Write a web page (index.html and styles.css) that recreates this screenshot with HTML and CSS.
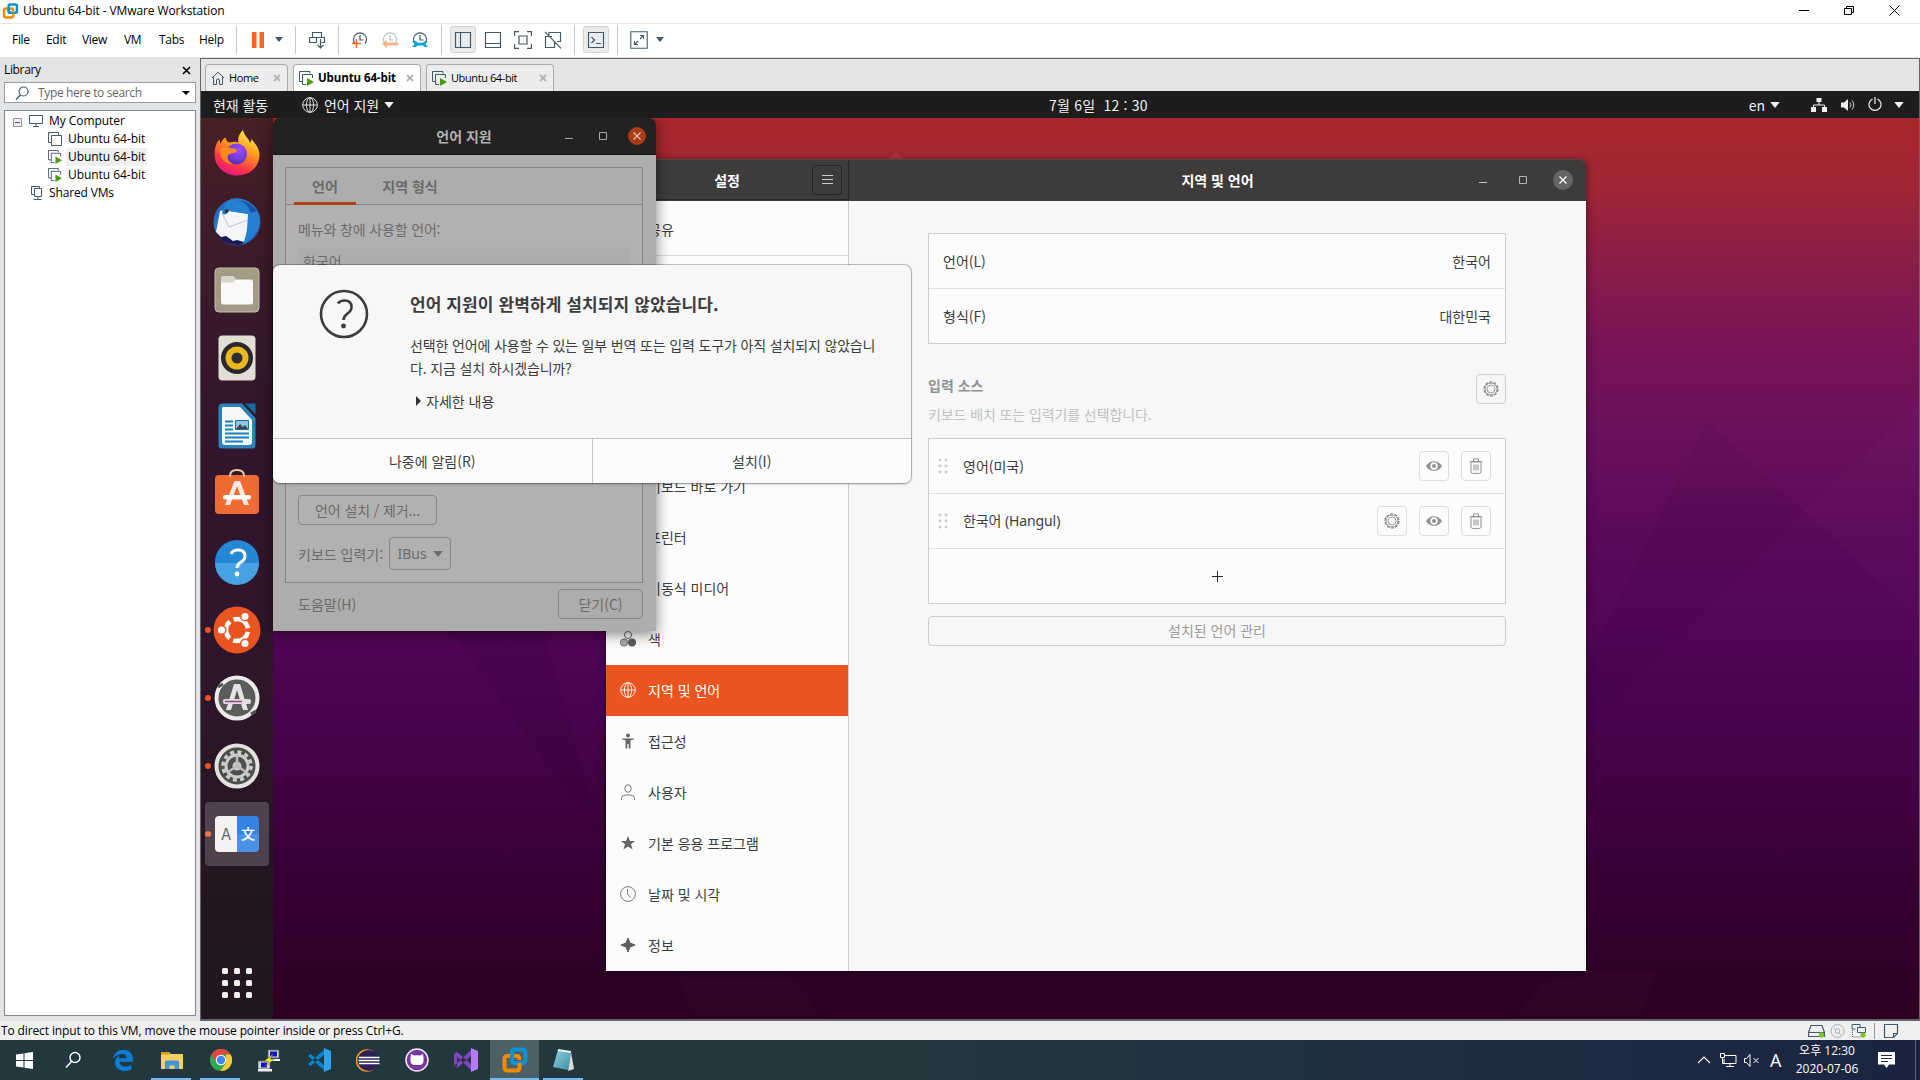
FILE: index.html
```html
<!DOCTYPE html>
<html lang="ko">
<head>
<meta charset="utf-8">
<title>Ubuntu 64-bit - VMware Workstation</title>
<link rel="stylesheet" href="styles.css">
</head>
<body>
<svg class="defs" width="0" height="0">
  <defs>
    <linearGradient id="gFox" x1="0.8" y1="0" x2="0.3" y2="1"><stop offset="0" stop-color="#fff44f"/><stop offset="0.4" stop-color="#ff9a1f"/><stop offset="0.75" stop-color="#ff3647"/><stop offset="1" stop-color="#e31587"/></linearGradient>
    <radialGradient id="gGlobe" cx="0.6" cy="0.3" r="0.8"><stop offset="0" stop-color="#a14bff"/><stop offset="0.5" stop-color="#7a3fe0"/><stop offset="1" stop-color="#4b2f9f"/></radialGradient>
    <linearGradient id="gBird" x1="0" y1="0" x2="1" y2="1"><stop offset="0" stop-color="#1b5fb8"/><stop offset="0.5" stop-color="#2a86d9"/><stop offset="1" stop-color="#1d3f94"/></linearGradient>
    <linearGradient id="gVm" x1="0" y1="0" x2="1" y2="1"><stop offset="0" stop-color="#8fd3e0"/><stop offset="1" stop-color="#3b8ea5"/></linearGradient>
    <symbol id="vm" viewBox="0 0 14 14"><path d="M3.5 10.500H.5V.5h10v3M3.500 3.500h10v10h-10z" fill="none" stroke="#44596a"/></symbol>
    <symbol id="vmrun" viewBox="0 0 15 15"><path d="M3 10.500H.5V.5h10.500v2M7 13.500H3.500v-10h10V7" fill="none" stroke="#44596a"/><path d="M8 7l7 4-7 4z" fill="#4c9a10"/></symbol>
    <symbol id="globe" viewBox="0 0 16 16"><g fill="none" stroke="currentColor" stroke-width=".9"><circle cx="8" cy="8" r="7.300"/><ellipse cx="8" cy="8" rx="3.600" ry="7.300"/><path d="M.7 8h14.600M8 .7v14.600"/></g></symbol>
    <symbol id="gear" viewBox="0 0 16 16"><g fill="none" stroke="currentColor"><circle cx="8" cy="8" r="6.900" stroke-width="1.500" stroke-dasharray="3 1.340"/><circle cx="8" cy="8" r="6"/><circle cx="8" cy="8" r="4" stroke-width=".9"/></g></symbol>
    <symbol id="eye" viewBox="0 0 16 16"><path d="M0 8c3.500-6.500 12.500-6.500 16 0-3.500 6.500-12.500 6.500-16 0z" fill="currentColor"/><circle cx="8" cy="8" r="3.700" fill="#fcfcfc"/><circle cx="8" cy="8" r="2" fill="currentColor"/></symbol>
    <symbol id="trash" viewBox="0 0 16 16"><path d="M1.500 4.500c0-1 1-1.500 2-1.500h9c1 0 2 .5 2 1.500z" fill="currentColor"/><path d="M5.500 3V.9h5V3M3 5v9c0 .8.500 1.400 1.300 1.400h7.400c.8 0 1.300-.6 1.300-1.400V5M6 6.500v6M8 6.500v6M10 6.500v6" fill="none" stroke="currentColor"/></symbol>
    <symbol id="clockface" viewBox="0 0 18 18"><path d="M4 12.500A6.500 6.500 0 1 1 14 12.500M9 4v5h3.500" fill="none" stroke="currentColor" stroke-width="1.200"/></symbol>
    <symbol id="tri" viewBox="0 0 8 5"><path d="M0 0h8L4 5z" fill="currentColor"/></symbol>
    <symbol id="vmware" viewBox="0 0 26 26"><rect x="10" y="2.500" width="13.500" height="13.500" rx="2.500" fill="none" stroke="#0d91d0" stroke-width="4"/><path d="M9 9H5.500Q2.500 9 2.500 12v8.500q0 3 3 3h9q3 0 3-3V16" fill="none" stroke="#f38b00" stroke-width="4"/><path d="M8 9h6.500q3 0 3 3v1" fill="none" stroke="#f38b00" stroke-width="3.800"/><path d="M10 7v6q0 3 2.500 3H15" fill="none" stroke="#0d91d0" stroke-width="4"/></symbol>
  </defs>
</svg>

<header class="titlebar">
  <svg class="logo" width="17" height="16"><use href="#vmware"/></svg>
  <span class="caption">Ubuntu 64-bit - VMware Workstation</span>
  <svg class="winbtn" width="11" height="11"><path d="M0 5.500h10" stroke="#000"/></svg>
  <svg class="winbtn" width="11" height="11"><path d="M.5 3.500h7v6h-7zM2.500 3V1.500h7v6H8" fill="none" stroke="#000"/></svg>
  <svg class="winbtn" width="11" height="11"><path d="M.5.5l10 10M10.500.5l-10 10" stroke="#000"/></svg>
</header>

<nav class="menubar">
  <span class="m m1">File</span><span class="m m2">Edit</span><span class="m m3">View</span><span class="m m4">VM</span><span class="m m5">Tabs</span><span class="m m6">Help</span>
  <i class="sep first"></i>
  <svg class="pause" width="12" height="16"><path d="M0 0h4.500v16H0zM7.500 0H12v16H7.500z" fill="#f9671c"/></svg>
  <svg class="drop a" width="8" height="5"><use href="#tri"/></svg>
  <i class="sep"></i>
  <svg class="tool" width="18" height="18"><path d="M4.500 1.500h9v5h-9zM1.500 6.500h7v5h-7zM8.500 6.500h8v5h-3M12.500 8v9M9.500 14l3 3 3-3" fill="none" stroke="#44596a" stroke-width="1.200"/></svg>
  <i class="sep"></i>
  <svg class="tool" width="18" height="18"><use href="#clockface" color="#44596a"/><path d="M1 12.500h9M5.500 8v9" stroke="#f9671c" stroke-width="1.500"/></svg>
  <svg class="tool" width="18" height="18"><use href="#clockface" color="#b7bec4"/><path d="M1 13l5-4v2.500h11v3H6V17z" fill="#fcb188"/></svg>
  <svg class="tool" width="18" height="18"><use href="#clockface" color="#44596a"/><path d="M1 10.500q4-2 5.500 1.200H12q2-3 5-1l-2.500 1.500v1.600L17 15.500q-3 1.800-5-1H6.500Q5 17.500 1 15.500l2.500-1.700v-1.600z" fill="#00a5d6"/></svg>
  <i class="sep"></i>
  <span class="toggle"><svg width="18" height="18"><path d="M1.500 1.500h15v15h-15zM6.500 1.500v15" fill="none" stroke="#44596a" stroke-width="1.200"/></svg></span>
  <svg class="tool near" width="18" height="18"><path d="M1.500 1.500h15v15h-15zM1.500 12.500h15" fill="none" stroke="#44596a" stroke-width="1.200"/></svg>
  <svg class="tool" width="18" height="18"><path d="M.6 5V.6H5M13 .6h4.400V5M17.400 13v4.400H13M5 17.400H.6V13M5 5h8v8H5z" fill="none" stroke="#44596a" stroke-width="1.200"/></svg>
  <svg class="tool" width="18" height="18"><path d="M5 4V1.500h11.500v9H13M8 5.500H1.500v11h9V10M1 .8l16 16.600" fill="none" stroke="#44596a" stroke-width="1.200"/></svg>
  <i class="sep"></i>
  <span class="toggle"><svg width="18" height="18"><path d="M1.500 1.500h15v15h-15zM4.500 6l3 3-3 3M9 12.500h5" fill="none" stroke="#44596a" stroke-width="1.200"/></svg></span>
  <i class="sep close"></i>
  <svg class="tool" width="18" height="18"><path d="M.8.8h16.400v16.400H.8zM10 4.500h3.500V8M13.500 4.500l-3.500 3.500M8 13.500H4.500V10M4.500 13.500L8 10" fill="none" stroke="#44596a" stroke-width="1.100"/></svg>
  <svg class="drop b" width="8" height="5"><use href="#tri"/></svg>
</nav>

<main class="workspace">
  <aside class="library">
    <div class="lib-head"><span>Library</span><svg width="9" height="9"><path d="M1 1l7 7M8 1L1 8" stroke="#000" stroke-width="1.600"/></svg></div>
    <div class="search"><svg width="14" height="14"><circle cx="8.500" cy="5.500" r="4.500" fill="none" stroke="#44596a" stroke-width="1.200"/><path d="M5.500 9L1 13.500" stroke="#44596a" stroke-width="1.400"/></svg><span>Type here to search</span><svg class="sdrop" width="8" height="4" viewBox="0 0 8 5" preserveAspectRatio="none"><path d="M0 0h8L4 5z"/></svg></div>
    <div class="tree">
      <div class="node root"><svg class="box" width="9" height="9"><path d="M.5.5h8v8h-8z" fill="#f4f4f4" stroke="#919191"/><path d="M2 4.500h5" stroke="#3b4f9a"/></svg><svg width="15" height="12"><path d="M.5.5h13v8H.500zM7 9v2M4 11.500h6" fill="none" stroke="#44596a"/></svg><span>My Computer</span></div>
      <div class="node"><svg width="14" height="14"><use href="#vm"/></svg><span>Ubuntu 64-bit</span></div>
      <div class="node picked"><svg width="14" height="14"><use href="#vmrun"/></svg><span>Ubuntu 64-bit</span></div>
      <div class="node"><svg width="14" height="14"><use href="#vmrun"/></svg><span>Ubuntu 64-bit</span></div>
      <div class="node shared"><svg width="12" height="14"><path d="M3 8.500H.5V.5h8v2M3.500 2.500h7v8h-7zM7 11v2.500M2.500 13.500h8" fill="none" stroke="#44596a"/></svg><span>Shared VMs</span></div>
    </div>
  </aside>

  <section class="console">
    <div class="tabs">
      <div class="tab home"><svg width="14" height="14"><path d="M1 7l6-5.800L13 7M2.500 6v7.500h3V9q0-1 1.500-1t1.500 1v4.500h3V6" fill="none" stroke="#44596a"/></svg><span>Home</span><svg class="x" width="8" height="8"><path d="M1 1l6 6M7 1L1 7"/></svg></div>
      <div class="tab active"><svg width="15" height="15"><use href="#vmrun"/></svg><span>Ubuntu 64-bit</span><svg class="x" width="8" height="8"><path d="M1 1l6 6M7 1L1 7"/></svg></div>
      <div class="tab other"><svg width="15" height="15"><use href="#vmrun"/></svg><span>Ubuntu 64-bit</span><svg class="x" width="8" height="8"><path d="M1 1l6 6M7 1L1 7"/></svg></div>
    </div>

    <div class="guest">
      <div class="topbar">
        <span class="activities">현재 활동</span>
        <span class="appmenu"><svg width="16" height="16"><use href="#globe"/></svg><span>언어 지원</span><svg width="10" height="6" viewBox="0 0 8 5"><use href="#tri"/></svg></span>
        <span class="date">7월 6일&nbsp; 12 : 30</span>
        <span class="status"><span>en</span><svg class="t1" width="10" height="6" viewBox="0 0 8 5"><use href="#tri"/></svg>
          <svg class="net" width="16" height="14"><path d="M5.500 0h5v4h-5zM0 9h5v5H0zM11 9h5v5h-5z" fill="#f0f0f0"/><path d="M8 4v3M2.500 9V7h11v2" fill="none" stroke="#f0f0f0"/></svg>
          <svg class="vol" width="16" height="14"><path d="M0 4.500h3L7 1v12L3 9.500H0z" fill="#f0f0f0"/><path d="M9 4.500q2 2.500 0 5M11 2.500q3.500 4.500 0 9" fill="none" stroke="#d0d0d0"/></svg>
          <svg class="pow" width="14" height="15"><path d="M4.500 2a6 6 0 1 0 5 0M7 0v7" fill="none" stroke="#f0f0f0" stroke-width="1.200"/></svg>
          <svg class="t2" width="10" height="6" viewBox="0 0 8 5"><use href="#tri"/></svg></span>
      </div>

      <div class="desktop">
        <svg class="facets" viewBox="0 0 1718 901" preserveAspectRatio="none">
          <path d="M1505 303L1602 393 1386 611V548z" fill="#200030" opacity=".06"/>
          <path d="M1718 287L1602 393 1718 500z" fill="#fff" opacity=".015"/>
          <path d="M240 500L400 720 340 500z" fill="#200030" opacity=".1"/>
          <path d="M477 853h110l35 48H492zM1355 853h100l-15 48h-130z" fill="#fff" opacity=".012"/>
          <path d="M686 41l9-7 9 7z" fill="#d04a58" opacity=".3"/>
        </svg>

        <div class="dock">
          <div class="slot"><svg width="46" height="46"><path d="M23 45.500C10 45.500.5 36 .5 24 .5 17 3 12 5.500 9.500L6.500 14c1-3 3-5.500 5-6.500.5 3 2 4.500 4 5 4-1 7-1 9 0C23 8 26 3 29 0c1 6 6 8 7 13 1-1 1.500-3 1.500-4 5 6 8.500 11 8 17-.7 11.500-10 19.500-22.500 19.500z" fill="url(#gFox)"/><circle cx="22.500" cy="24" r="10.500" fill="url(#gGlobe)"/><path d="M6 19c5-3 9-1 11-1 4 1 6 1 6 3-2 3-5 1-9 4-2 4 2 8 5 9-9 0-14-7-13-15z" fill="#ff8a1a"/></svg></div>
          <div class="slot low"><svg width="50" height="50"><circle cx="25" cy="25" r="23.500" fill="url(#gBird)"/><path d="M3 35l30 10q-5 4-9 3Q9 47 3 35z" fill="#1c1a52"/><path d="M8 14l4-1 24 4-1 26-3 2-7-2-4 1-7-5-5 1-5-5z" fill="#f5f5f8"/><path d="M10 16l7 14 19-7" fill="none" stroke="#c3c3cc"/><path d="M10 16c3 3 5 1 7-2l19 3c0 11-1 20-5 30C46 41 50 26 47 17 42 6 30-1 19 2c-5 3-8 8-9 14z" fill="#2680d0"/><path d="M20 3q14-1 19 13l6-2Q38 2 20 3z" fill="#1a53ae"/><circle cx="14.500" cy="14" r="2" fill="#333"/></svg></div>
          <div class="slot low"><svg width="46" height="46"><rect x="1" y="1" width="44" height="44" rx="4" fill="#a39b86" stroke="#c4bfb0"/><rect x="7" y="12.500" width="32" height="25" rx="2.500" fill="#faf9f7"/><path d="M7 15.500V11q0-2 2-2h10l3 3-3 3.500z" fill="#d9d6cd"/></svg></div>
          <div class="slot low"><svg width="38" height="46"><rect x=".5" y=".5" width="37" height="45" rx="4" fill="#e3ded3"/><circle cx="19" cy="23" r="16" fill="#28282e"/><circle cx="19" cy="23" r="11.500" fill="#eab71c"/><circle cx="19" cy="23" r="5.500" fill="#303033"/></svg></div>
          <div class="slot low"><svg width="38" height="46"><path d="M5 .5h19L37.500 15v27q0 3.500-3.500 3.500H4Q.5 45.500.5 42V4Q.5.5 5 .5z" fill="#2b84b8"/><path d="M5 4h17l12 13v22q0 3-3 3H7q-3 0-3-3V5z" fill="#f7f8f9"/><path d="M27 .5h10.500v11z" fill="#106ba3"/><path d="M7 18.500h8M7 22.500h8M7 26.500h8M7 30.500h24M7 34.500h24M7 38.500h18" stroke="#1a7fc0" stroke-width="2"/><path d="M17.500 17.500h13v9h-13z" fill="#8ec4e4" stroke="#1a6ca0"/><path d="M18 26l4-5 3 3 2-2 3 4z" fill="#454545"/></svg></div>
          <div class="slot"><svg width="46" height="48"><path d="M16 10V7q0-6 7-6t7 6v3" fill="none" stroke="#eacb9b" stroke-width="2"/><rect x="1" y="6" width="44" height="39" rx="4" fill="#f06a33"/><path d="M16 8V6M30 8V6" stroke="#eacb9b" stroke-width="2"/><path d="M20.500 12h5.500l9 24h-5l-7-19-7 19h-5z" fill="#f8e9e2"/><rect x="9" y="26" width="28" height="4.500" rx="2" fill="#fff"/></svg></div>
          <div class="slot low"><svg width="46" height="46"><circle cx="23" cy="23" r="22" fill="#2588d6"/><path d="M1 24a22 22 0 0 0 44 0z" fill="#46a2e3"/><path d="M17 15q2-4 7-4 7 0 7 6 0 4-4 6-4 2.500-4 6" fill="none" stroke="#fff" stroke-width="3"/><circle cx="23" cy="35" r="2.400" fill="#fff"/></svg></div>
          <div class="slot run"><svg width="48" height="48"><circle cx="24" cy="24" r="23.500" fill="#e95420"/><circle cx="24" cy="24" r="11" fill="none" stroke="#fff" stroke-width="4.500" stroke-dasharray="19 4" stroke-dashoffset="-2"/><circle cx="8.500" cy="24" r="4.300" fill="#fff" stroke="#e95420" stroke-width="1.500"/><circle cx="32" cy="10.500" r="4.300" fill="#fff" stroke="#e95420" stroke-width="1.500"/><circle cx="32" cy="37.500" r="4.300" fill="#fff" stroke="#e95420" stroke-width="1.500"/></svg></div>
          <div class="slot run"><svg width="46" height="46"><circle cx="23" cy="23" r="20.500" fill="#5c5c5a" stroke="#ecebe9" stroke-width="4"/><path d="M4 12l5-3M37 39l5-3" stroke="#555" stroke-width="3"/><path d="M20 9h6l8 26h-5l-6-20-6 20h-5z" fill="#e6e4e2"/><rect x="9" y="24" width="28" height="5" rx="2" fill="#ddd"/><path d="M11 26.500h17" stroke="#a0409a" stroke-width="1.500"/></svg></div>
          <div class="slot run"><svg width="46" height="46"><circle cx="23" cy="23" r="20.500" fill="#4e4e4c" stroke="#e3e2df" stroke-width="4"/><circle cx="23" cy="23" r="14" fill="none" stroke="#ccc" stroke-width="3.500" stroke-dasharray="4 3.330"/><circle cx="23" cy="23" r="11" fill="none" stroke="#ccc" stroke-width="3"/><circle cx="23" cy="23" r="4.500" fill="#c8c8c8"/><path d="M23 23V12M23 23l9 6M23 23l-9 6" stroke="#bbb" stroke-width="2.500"/></svg></div>
          <div class="slot run current"><div class="lang-icon"><span>A</span><span>文</span></div></div>
          <div class="apps"><i></i><i></i><i></i><i></i><i></i><i></i><i></i><i></i><i></i></div>
        </div>

        <section class="win settings">
          <div class="s-head">
            <div class="s-left"><b>설정</b><span class="burger"><svg width="11" height="11"><path d="M0 1.500h11M0 5.500h11M0 9.500h11" stroke="#ccc"/></svg></span></div>
            <div class="s-right"><b>지역 및 언어</b>
              <span class="controls"><svg width="20" height="20"><path d="M6 12.500h8" stroke="#c8c8c8"/></svg><svg width="20" height="20"><path d="M6.500 6.500h7v7h-7z" fill="none" stroke="#b4b4b4"/></svg><svg width="20" height="20"><circle cx="10" cy="10" r="10" fill="#666564"/><path d="M6.500 6.500l7 7M13.500 6.500l-7 7" stroke="#fff" stroke-width="1.300"/></svg></span>
            </div>
          </div>
          <div class="s-body">
            <div class="side">
              <div class="row share"><span>공유</span></div>
              <div class="row keys"><span>키보드 바로 가기</span></div>
              <div class="row"><span>프린터</span></div>
              <div class="row"><span>이동식 미디어</span></div>
              <div class="row"><svg width="16" height="16"><circle cx="8" cy="4" r="3.500" fill="none" stroke="#666"/><circle cx="4" cy="11.500" r="3.600" fill="#aaa" stroke="#666"/><circle cx="12" cy="11.500" r="4" fill="#5c5c5c"/></svg><span>색</span></div>
              <div class="row on"><svg width="16" height="16"><use href="#globe"/></svg><span>지역 및 언어</span></div>
              <div class="row"><svg width="16" height="16"><circle cx="8" cy="2.500" r="2" fill="#666"/><path d="M2 5.500h12v1l-3.500.7v8.300H8.700V11H7.300v4.500H5.500V7.200L2 6.500z" fill="#666"/></svg><span>접근성</span></div>
              <div class="row"><svg width="16" height="16"><ellipse cx="8" cy="4.500" rx="3.200" ry="3.800" fill="none" stroke="#777"/><path d="M1.500 16v-1.500q0-3.500 4-3.500h5q4 0 4 3.500V16" fill="none" stroke="#777"/></svg><span>사용자</span></div>
              <div class="row"><svg width="16" height="16"><path d="M8 1l2 5h5l-4 3.300 1.600 5.200L8 11.500l-4.600 3L5 9.300 1 6h5z" fill="#666"/></svg><span>기본 응용 프로그램</span></div>
              <div class="row"><svg width="16" height="16"><circle cx="8" cy="8" r="7.400" fill="none" stroke="#777"/><path d="M7.500 3v5l3 3.500" fill="none" stroke="#777"/></svg><span>날짜 및 시각</span></div>
              <div class="row"><svg width="16" height="16"><path d="M8 1l2 5 5 2-5 2-2 5-2-5-5-2 5-2z" fill="#5c5c5c" stroke="#5c5c5c"/></svg><span>정보</span></div>
            </div>
            <div class="pane">
              <div class="card">
                <div class="line"><span>언어(L)</span><span>한국어</span></div>
                <div class="line"><span>형식(F)</span><span>대한민국</span></div>
              </div>
              <div class="sources"><div><b>입력 소스</b><p>키보드 배치 또는 입력기를 선택합니다.</p></div><span class="ib dark"><svg width="16" height="16"><use href="#gear"/></svg></span></div>
              <div class="card list">
                <div class="line"><i class="grip"></i><span class="name">영어(미국)</span><span class="ib"><svg width="16" height="16"><use href="#eye"/></svg></span><span class="ib"><svg width="16" height="16"><use href="#trash"/></svg></span></div>
                <div class="line"><i class="grip"></i><span class="name latin">한국어 (Hangul)</span><span class="ib"><svg width="16" height="16"><use href="#gear"/></svg></span><span class="ib"><svg width="16" height="16"><use href="#eye"/></svg></span><span class="ib"><svg width="16" height="16"><use href="#trash"/></svg></span></div>
                <div class="line add"><svg width="11" height="11"><path d="M0 5.500h11M5.500 0v11" stroke="#2b2b2b"/></svg></div>
              </div>
              <div class="manage">설치된 언어 관리</div>
            </div>
          </div>
        </section>

        <section class="win support">
          <div class="l-head"><b>언어 지원</b><span class="controls"><svg width="18" height="18"><path d="M5 11.500h8" stroke="#aaa"/></svg><svg width="18" height="18"><path d="M5.500 5.500h7v7h-7z" fill="none" stroke="#aaa"/></svg><svg width="18" height="18"><circle cx="9" cy="9" r="9" fill="#a83c17"/><path d="M5.500 5.500l7 7M12.500 5.500l-7 7" stroke="#d8c5bd" stroke-width="1.200"/></svg></span></div>
          <div class="l-body">
            <div class="book">
              <div class="pages"><b class="cur">언어</b><b>지역 형식</b></div>
              <p class="cap">메뉴와 창에 사용할 언어:</p>
              <div class="langs">한국어</div>
              <div class="btn inst">언어 설치 / 제거...</div>
              <div class="im"><span>키보드 입력기:</span><span class="btn combo">IBus<svg width="10" height="6" viewBox="0 0 8 5"><use href="#tri"/></svg></span></div>
            </div>
            <div class="foot"><span>도움말(H)</span><span class="btn shut">닫기(C)</span></div>
          </div>
        </section>

        <section class="dialog">
          <div class="d-main">
            <svg width="50" height="50"><circle cx="25" cy="25" r="23" fill="none" stroke="#3d3d3d" stroke-width="2.600"/><path d="M19 14.500q2-3 6.500-3 7 0 7 6.500 0 4-4 6.500-4 3-4 6.500" fill="none" stroke="#3d3d3d" stroke-width="2.600"/><circle cx="24.500" cy="37" r="2.400" fill="#3d3d3d"/></svg>
            <div class="d-text">
              <h1>언어 지원이 완벽하게 설치되지 않았습니다.</h1>
              <p>선택한 언어에 사용할 수 있는 일부 번역 또는 입력 도구가 아직 설치되지 않았습니<br>다. 지금 설치 하시겠습니까?</p>
              <div class="more"><svg width="5" height="10"><path d="M0 0l5 5-5 5z" fill="#333"/></svg><span>자세한 내용</span></div>
            </div>
          </div>
          <div class="d-actions"><span>나중에 알림(R)</span><span>설치(I)</span></div>
        </section>
      </div>
    </div>
  </section>
</main>

<footer class="statusbar">
  <span>To direct input to this VM, move the mouse pointer inside or press Ctrl+G.</span>
  <svg width="98" height="16">
    <path d="M3 2.500h11l2.500 7v4H.5v-4zM.5 9.500h16" fill="none" stroke="#44596a" stroke-width="1.200"/><circle cx="13.500" cy="12" r="2.800" fill="#7ac421"/>
    <circle cx="29.500" cy="8" r="6.500" fill="none" stroke="#a9b1b8"/><circle cx="29.500" cy="8" r="2.200" fill="none" stroke="#a9b1b8"/><path d="M26 5l2 2M31 10l2 2" stroke="#a9b1b8"/>
    <path d="M47.500 6h-3.500V1.500h8V4M49.500 4.500h8v5h-8z" fill="none" stroke="#44596a"/><path d="M44.500 7v7h9" fill="none" stroke="#44596a" stroke-dasharray="1 1"/><circle cx="55" cy="12" r="2.600" fill="#7ac421"/>
    <path d="M66.500 0v16" stroke="#999"/>
    <path d="M76.500 1.500h13v9l-4 4h-9zM89.500 10.500h-4v4" fill="none" stroke="#44596a" stroke-width="1.200"/>
  </svg>
</footer>

<div class="taskbar">
  <div class="cell start"><svg width="17" height="17"><path d="M0 2.500l7.500-1V8H0zM8.500 1.300L17 0v8H8.500zM0 9h7.500v6.500l-7.500-1zM8.500 9H17v8l-8.500-1.300z" fill="#fff"/></svg></div>
  <div class="cell find"><svg width="18" height="18"><circle cx="11" cy="6.500" r="5" fill="none" stroke="#fff" stroke-width="1.400"/><path d="M7.500 10.500L2 16.500" stroke="#fff" stroke-width="1.500"/></svg></div>
  <div class="cell"><svg width="22" height="22"><path d="M1 10C2 4 6 .7 11.500.7c6 0 9.500 4.300 9.500 9.500v2.500H7.500c.3 3.300 3 4.800 6 4.800 2.500 0 4.500-.7 6-1.700v4.400c-2 1-4.200 1.600-7 1.600-6 0-9.500-3.500-9.500-8.300 0-3.300 2-6.200 5-7.500-.8 1-1.200 2-1.300 3.200h8C14.700 6.500 13 5 10.500 5 6.500 5 3 7 1 10z" fill="#0f7bd9"/></svg></div>
  <div class="cell open"><svg width="22" height="19"><path d="M0 1h8l2 2h12v15H0z" fill="#f7cf63"/><path d="M0 1h8l2 2.500H0z" fill="#d99a1c"/><path d="M4 18v-7q0-1.500 1.500-1.500h11Q18 9.500 18 11v7h-4.500v-3.500h-5V18z" fill="#3f97d8"/></svg></div>
  <div class="cell open"><svg width="22" height="22"><circle cx="11" cy="11" r="11" fill="#2da94f"/><path d="M11 0a11 11 0 0 1 9.600 5.500H11L6 13.500 1.400 5.700A11 11 0 0 1 11 0z" fill="#e3483b"/><path d="M20.600 5.500A11 11 0 0 1 10.500 22L16 13.800V5.500z" fill="#fcc934"/><circle cx="11" cy="11" r="5.300" fill="#fff"/><circle cx="11" cy="11" r="4.200" fill="#4285f4"/></svg></div>
  <div class="cell"><svg width="23" height="23"><path d="M10 1h11v8H10zM0 12h12v8H0z" fill="#d6d6d0" stroke="#555" stroke-width=".8"/><path d="M12 2.500h7v5h-7zM3 13.500h6v5H3z" fill="#1414c8"/><path d="M10 10h12v2H10zM0 20h14v2.500H0z" fill="#eee"/><path d="M15 5L6 12.500h5L7 18l9-8h-4z" fill="#f4ee1e" stroke="#665" stroke-width=".5"/></svg></div>
  <div class="cell"><svg width="24" height="24"><path d="M1 8l2.500-2L18 18v5zM1 16l2.500 2L18 6V1z" fill="#0c84cc"/><path d="M17 0l7 3v18l-7 3z" fill="#2aa4ef"/></svg></div>
  <div class="cell"><svg width="24" height="23"><circle cx="11" cy="11.500" r="10.500" fill="none" stroke="#f7941e" stroke-width="1.600"/><circle cx="13" cy="11.500" r="10.500" fill="#2c2255"/><path d="M3 8.500h20.500M2.500 11.500h21M3 14.500h20.500" stroke="#fff" stroke-width="1.500"/></svg></div>
  <div class="cell"><svg width="24" height="24"><circle cx="12" cy="12" r="11" fill="#7a36a0" stroke="#f1eaf5" stroke-width="1.500"/><path d="M6 6l3.500 1.600q2.500-.6 5 0L18 6l.6 4.500q.4 5.500-3.100 6.500h-7q-3.500-1-3.100-6.500z" fill="#fff"/></svg></div>
  <div class="cell"><svg width="24" height="24"><path d="M0 6l3-2L18 17v6zM0 18l3 2L18 7V1zM0 6h3v13H0z" fill="#8445c4"/><path d="M17 0l7 3v18l-7 3z" fill="#b77cf0"/></svg></div>
  <div class="cell focus"><svg width="26" height="26"><use href="#vmware"/></svg></div>
  <div class="cell open"><svg width="23" height="23"><path d="M6 1l13 2-3 18-15-3z" fill="url(#gVm)"/><path d="M19 3l3 17-6 2z" fill="#d9dcdc"/><path d="M6 1l13 2" stroke="#e8eef0" stroke-width="2"/></svg></div>
  <div class="tray">
    <svg width="14" height="8"><path d="M1 7l6-6 6 6" fill="none" stroke="#fff" stroke-width="1.200"/></svg>
    <svg class="tn" width="17" height="15"><path d="M5 2.500h11v8H4V6M10 11v3M6 13.500h8" fill="none" stroke="#fff"/><path d="M.5.5h4v4h-4zM2.500 4.500v6h3" fill="none" stroke="#fff"/></svg>
    <svg class="tv" width="15" height="13"><path d="M.5 4.500h2l3.500-4v12l-3.500-4h-2zM9.500 4l5 5M14.500 4l-5 5" fill="none" stroke="#fff"/></svg>
    <span class="ime">A</span>
    <span class="clock">오후 12:30<br>2020-07-06</span>
    <svg class="note" width="17" height="16"><path d="M0 0h17v12.500h-6L8.500 16 6 12.500H0z" fill="#fff"/><path d="M3 3.500h11M3 6.500h11M3 9.500h7" stroke="#1c2a42"/></svg>
    <i class="peek"></i>
  </div>
</div>
</body>
</html>
```
FILE: styles.css
```css
* { box-sizing: border-box; }
body {
  margin: 0; width: 1920px; height: 1080px; overflow: hidden;
  display: flex; flex-direction: column;
  font: 12px/18px "Open Sans", "Noto Sans CJK KR", sans-serif;
  color: #000; background: #e3e4e6;
}
svg { display: block; flex: none; }
span, b { white-space: nowrap; }
.defs { position: absolute; }

.titlebar { height: 24px; display: flex; align-items: center; background: #fff; border-bottom: 1px solid #e5e5e5; padding: 0 20px 3px 2px; }
.titlebar .logo { margin-right: 4px; margin-top: 2px; }
.caption { flex: 1; letter-spacing: -.09px; margin-top: 2px; }
.winbtn { margin-left: 34px; }

.menubar { height: 34px; display: flex; align-items: center; background: #fff; padding: 0 0 2px 12px; border-bottom: 1px solid #e0e0e0; letter-spacing: -.3px; }
.m1 { width: 34px; } .m2 { width: 36px; } .m3 { width: 42px; } .m4 { width: 35px; } .m5 { width: 40px; } .m6 { width: 37px; }
.sep { width: 1px; height: 28px; background: #c6c6c6; margin-left: 12px; flex: none; }
.sep.first { margin-left: 0; }
.sep.close { margin-left: 8px; }
.pause { margin-left: 15px; }
.drop { color: #44596a; }
.drop.a { margin-left: 11px; }
.drop.b { margin-left: 8px; }
.tool { margin-left: 12px; }
.toggle { width: 26px; height: 27px; margin-left: 8px; display: flex; align-items: center; justify-content: center; background: #e9ebed; border: 1px solid #d0d2d4; border-radius: 3px; }
.toggle + .near, .toggle + .sep { margin-left: 8px; }

.workspace { height: 963px; display: flex; }
.library { width: 200px; padding: 0 4px 0 4px; display: flex; flex-direction: column; }
.lib-head { height: 24px; display: flex; align-items: center; justify-content: space-between; padding: 0 5px 0 0; letter-spacing: -.35px; }
.search { width: 192px; height: 21px; display: flex; align-items: center; background: #fff; border: 1px solid #9a9ca0; color: #666; padding: 0 5px 0 10px; }
.search span { flex: 1; margin-left: 9px; letter-spacing: -.35px; }
.tree { width: 192px; height: 906px; margin-top: 7px; background: #fff; border: 1px solid #828790; padding: 1px 0 0 8px; }
.node { height: 18px; display: flex; align-items: center; padding-left: 35px; letter-spacing: -.05px; }
.node span { padding: 0 2px; margin-left: 4px; }
.node.root, .node.shared { padding-left: 0; }
.node.root .box { margin-right: 7px; margin-top: 3px; }
.node.root span { margin-left: 3px; }
.node.shared { padding-left: 18px; }
.node.shared span { letter-spacing: -.15px; }
.node.picked span { background: #efefef; }

.console { flex: 1; border: 1px solid #646567; border-width: 1px 1px 2px 1px; display: flex; flex-direction: column; }
.tabs { height: 32px; display: flex; align-items: flex-end; padding-left: 4px; font-size: 11px; letter-spacing: -.4px; }
.tab { height: 27px; display: flex; align-items: center; background: #ececed; border: 1px solid #a9abad; border-bottom: 0; border-radius: 4px 4px 0 0; padding: 0 6px 0 5px; margin-right: 5px; }
.tab.home { width: 83px; } .tab.active { width: 128px; } .tab.other { width: 128px; }
.tab.active { background: #fff; font-weight: 700; font-size: 11.500px; letter-spacing: -.1px; }
.tab span { flex: 1; margin-left: 4px; }
.tab .x { stroke: #b3b3b3; stroke-width: 1.800; }

.guest { flex: 1; display: flex; flex-direction: column; font: 14px/20px "Noto Sans CJK KR", "Noto Sans", sans-serif; }
.topbar { height: 27px; background: #1d1d1d; color: #f0f0f0; display: grid; grid-template-columns: 90px 746px 1fr auto; align-items: center; padding: 0 15px 0 12px; }
.appmenu { display: flex; align-items: center; gap: 6px; }
.appmenu svg { margin-left: -1px; }
.appmenu > span { padding-top: 1px; letter-spacing: -.1px; }
.activities { padding-top: 1px; letter-spacing: -.05px; }
.date { padding-top: 1px; letter-spacing: .2px; }
.status { display: flex; align-items: center; justify-content: flex-end; }
.t1 { margin: 0 31px 0 5px; }
.vol { margin-left: 14px; } .pow { margin-left: 11px; } .t2 { margin-left: 12px; }

.desktop { flex: 1; position: relative; overflow: hidden; background: linear-gradient(#a8272b 0, #a02536 70px, #8c1d48 140px, #791456 220px, #69105d 320px, #5b0859 420px, #530657 500px, #46034a 620px, #3a0038 740px, #2b0020 901px); }
.facets { width: 100%; height: 100%; position: absolute; inset: 0; }
.dock { position: relative; width: 72px; height: 100%; padding-top: 1px; background: linear-gradient(#481f24 0, #3b1a2a 150px, #33152d 300px, #2f152c 530px, #231620 800px, #211720 100%); }
.slot { height: 68px; display: flex; align-items: center; justify-content: center; position: relative; }
.slot.low { padding-top: 2px; }
.slot.run::before { content: ""; position: absolute; left: 4px; top: 32px; width: 6px; height: 6px; border-radius: 50%; background: #e95420; }
.slot.current::after { content: ""; position: absolute; inset: 3px 4px 1px; border-radius: 4px; background: rgba(255,255,255,.19); }
.slot.run svg, .lang-icon { margin-top: 1px; }
.lang-icon { position: relative; z-index: 1; width: 44px; height: 36px; display: flex; border-radius: 4px; overflow: hidden; font-size: 16px; line-height: 35px; text-align: center; }
.lang-icon span { flex: 1; background: #f4f3f1; color: #666; }
.lang-icon span + span { background: linear-gradient(#3584e4 50%, #4a92e8 50%); color: #fff; font-weight: 500; font-size: 14px; }
.apps { display: grid; grid-template-columns: repeat(3, 6px); gap: 6px; justify-content: center; margin-top: 101px; }
.apps i { width: 6px; height: 6px; border-radius: 1.500px; background: #f2f0ef; }

.win { position: absolute; display: flex; flex-direction: column; }
.controls { position: absolute; right: 9px; display: flex; gap: 16px; }
.settings { left: 405px; top: 41px; width: 980px; height: 812px; color: #3d3d3d; box-shadow: 0 2px 9px rgba(0,0,0,.5); border-radius: 7px 7px 0 0; }
.s-head { height: 42px; display: flex; background: #3d3c3a; border-top: 1px solid #4b4a48; border-radius: 7px 7px 0 0; color: #fff; padding-bottom: 2px; }
.s-left { width: 243px; box-shadow: 1px 2px 0 -1px #292827; border-right: 1px solid #292827; display: flex; align-items: center; justify-content: flex-end; padding-right: 6px; }
.s-left b { margin-right: 72px; }
.burger { width: 30px; height: 30px; border: 1px solid #262524; border-radius: 4px; display: flex; align-items: center; justify-content: center; }
.s-right { flex: 1; display: flex; align-items: center; justify-content: center; position: relative; }
.settings .controls { right: 13px; gap: 20px; }
.s-body { flex: 1; display: flex; overflow: hidden; }
.side { width: 243px; background: #fcfcfc; border-right: 1px solid #cdcdcd; }
.row { height: 51px; display: flex; align-items: center; padding-left: 14px; color: #3d3d3d; }
.row svg { margin-top: -2px; margin-right: 12px; }
.row span { margin-top: -1px; }
.row.share { height: 55px; padding: 3px 0 0 42px; border-bottom: 1px solid #dcdcdc; margin-bottom: 205px; }
.row.keys, .row.keys + .row, .row.keys + .row + .row { padding-left: 42px; }
.row.on { background: #e95420; color: #fff; }
.pane { flex: 1; background: #f7f7f7; padding: 32px 80px 0 79px; }
.card { border: 1px solid #cdcdcd; background: #fcfcfc; }
.card .line { height: 55px; display: flex; align-items: center; justify-content: space-between; padding: 0 14px; border-bottom: 1px solid #e1e1e1; }
.card .line:last-child { border-bottom: 0; height: 54px; }
.sources { display: flex; justify-content: space-between; align-items: flex-start; height: 94px; padding-top: 30px; }
.sources b { display: block; color: #929292; margin-top: 1px; }
.sources p { margin: 9px 0 0; color: #c2c2c2; letter-spacing: -.1px; }
.ib { width: 30px; height: 30px; border: 1px solid #dedede; border-radius: 4px; display: flex; align-items: center; justify-content: center; color: #929292; margin-left: 12px; }
.ib.dark { border-color: #cdcdcd; }
.list .line { padding-left: 8px; justify-content: flex-start; }
.name { flex: 1; margin-left: 17px; }
.latin { font-family: "Noto Sans", "Noto Sans CJK KR", sans-serif; letter-spacing: -.1px; }
.grip { width: 12px; height: 18px; margin-right: -3px; background: radial-gradient(circle, #cfcfcf 1.200px, transparent 1.800px) 0 0/6px 6px; }
.card .line.add { justify-content: center; padding: 0; }
.manage { margin-top: 12px; height: 30px; border: 1px solid #cdcdcd; border-radius: 4px; color: #9b9b9b; display: flex; align-items: center; justify-content: center; line-height: 18px; padding-bottom: 2px; }

.support { left: 72px; top: 0; width: 383px; height: 513px; color: #6b6b6b; box-shadow: 0 3px 14px rgba(0,0,0,.5); border-radius: 7px 7px 0 0; }
.l-head { height: 37px; display: flex; align-items: center; justify-content: center; background: #232122; color: #b2b2b2; border-bottom: 1px solid #161616; border-radius: 7px 7px 0 0; }
.l-head b { margin-right: 1px; }
.l-body { flex: 1; background: #adadad; padding: 12px 13px 0 12px; }
.support .controls { right: 10px; }
.book { height: 416px; border: 1px solid #868686; background: #b1b1b1; display: flex; flex-direction: column; }
.pages { height: 37px; background: #adadad; border-bottom: 1px solid #868686; display: flex; padding-left: 8px; line-height: 36px; }
.pages b { width: 62px; text-align: center; height: 37px; }
.pages b + b { margin-left: 16px; width: 76px; }
.cur { border-bottom: 3px solid #b0411b; }
.cap { margin: 14px 0 0 12px; letter-spacing: -.15px; }
.langs { margin: 8px 13px 0 12px; height: 237px; background: #adadad; padding: 4px 5px; }
.btn { border: 1px solid #868686; border-radius: 4px; display: flex; align-items: center; justify-content: center; }
.inst { width: 139px; height: 30px; margin: 11px 0 0 12px; letter-spacing: -.1px; padding-bottom: 1px; }
.im { display: flex; align-items: center; margin: 12px 0 0 12px; }
.combo { width: 62px; height: 33px; margin-left: 6px; gap: 6px; font-family: "Noto Sans"; }
.foot { display: flex; align-items: center; justify-content: space-between; margin: 6px 0 0; padding-left: 13px; }
.shut { width: 85px; height: 30px; }

.dialog { position: absolute; left: 72px; top: 147px; width: 638px; height: 218px; background: #f7f7f7; border-radius: 7px; box-shadow: 0 0 0 1px rgba(0,0,0,.22), 0 1px 3px rgba(0,0,0,.25); color: #3d3d3d; overflow: hidden; display: flex; flex-direction: column; }
.d-main { flex: 1; display: flex; padding: 24px 0 0 46px; }
.d-text { margin-left: 41px; }
.d-text h1 { margin: 3px 0 0; font-size: 17px; line-height: 24px; font-weight: 700; white-space: nowrap; letter-spacing: .11px; }
.d-text p { margin: 18px 0 0; line-height: 23px; white-space: nowrap; letter-spacing: -.15px; }
.more { display: flex; align-items: center; margin: 11px 0 0 6px; }
.more span { margin-left: 5px; }
.d-actions { height: 45px; display: flex; background: #fcfcfc; border-top: 1px solid #c4c4c4; }
.d-actions span { flex: 1; display: flex; align-items: center; justify-content: center; }
.d-actions span + span { border-left: 1px solid #c4c4c4; }

.statusbar { height: 19px; display: flex; align-items: center; justify-content: space-between; background: #f0f0f0; padding: 0 14px 0 1px; letter-spacing: -.12px; }

.taskbar { height: 40px; display: flex; background: linear-gradient(90deg, #22373e 0, #22383e 45%, #1d2a42 85%, #1a2440 100%); color: #fff; }
.cell { width: 49px; height: 40px; display: flex; align-items: center; justify-content: center; position: relative; }
.cell.start { width: 48px; }
.cell.find { width: 50px; }
.cell.open::after { content: ""; position: absolute; left: 4px; right: 5px; bottom: 0; height: 2px; background: #76b9ed; }
.cell.focus { background: #4c6066; border-bottom: 2px solid #76b9ed; padding-top: 2px; }
.tray { flex: 1; display: flex; align-items: center; justify-content: flex-end; }
.tn { margin-left: 9px; }
.tv { margin-left: 7px; }
.ime { font-size: 18px; margin-left: 11px; width: 14px; }
.clock { width: 78px; margin-left: 4px; text-align: center; font-size: 12px; letter-spacing: 0; }
.note { margin-left: 12px; }
.peek { width: 1px; height: 40px; background: #59657a; margin: 0 4px 0 20px; }
```
